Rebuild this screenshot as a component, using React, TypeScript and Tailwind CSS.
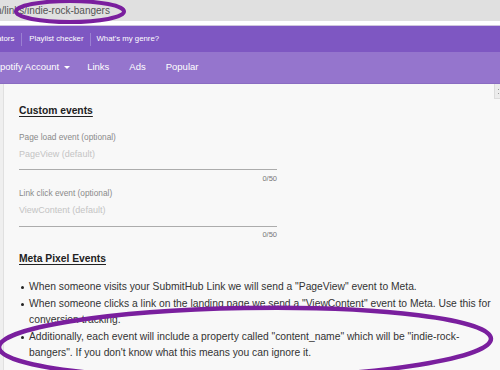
export default function App() {
  const bullets = [
    'When someone visits your SubmitHub Link we will send a "PageView" event to Meta.',
    'When someone clicks a link on the landing page we send a "ViewContent" event to Meta. Use this for conversion tracking.',
    'Additionally, each event will include a property called "content_name" which will be "indie-rock-bangers". If you don\'t know what this means you can ignore it.',
  ];

  return (
    <div className="relative w-[500px] h-[370px] overflow-hidden bg-[#f8f8f8] font-['Liberation_Sans',Arial,sans-serif]">
      {/* browser address bar */}
      <div className="h-[21px] bg-[#e0e0e0] flex items-center overflow-hidden">
        <span className="ml-[-4px] text-[10px] leading-[12px] text-[#555] whitespace-nowrap">
          n/links/indie-rock-bangers
        </span>
      </div>
      <div className="h-[5px] bg-white border-b border-[#cfc6dd]" />

      {/* top nav */}
      <div className="h-[26px] bg-[#7e57c2] flex items-center text-[7.8px] text-white whitespace-nowrap">
        <span className="ml-[-3px]">ators</span>
        <span className="mx-[7px] w-px h-[13px] bg-[#9b80d2]" />
        <span>Playlist checker</span>
        <span className="mx-[6px] w-px h-[13px] bg-[#9b80d2]" />
        <span>What's my genre?</span>
      </div>

      {/* secondary nav */}
      <div className="h-[32px] bg-[#9575cd] flex items-center text-[9.5px] text-white whitespace-nowrap border-b border-[#8a6cc2]">
        <span className="flex items-center">
          potify Account
          <span className="ml-[5px] w-0 h-0 border-l-[3px] border-r-[3px] border-t-[3px] border-l-transparent border-r-transparent border-t-white" />
        </span>
        <span className="ml-[17px]">Links</span>
        <span className="ml-[20px]">Ads</span>
        <span className="ml-[20px]">Popular</span>
      </div>

      {/* content */}
      <div className="flex h-[286px]">
        <div className="w-[4px] bg-[#efefef] border-r border-[#e0e0e0]" />
        <div className="flex-1 pl-[15px] pr-[4px] pt-[21px] text-[#222]">
          <div className="text-[10.3px] leading-[12px] font-bold underline underline-offset-[2px]">Custom events</div>

          <div className="w-[258px] mt-[14px]">
            <div className="text-[8.3px] leading-[12px] text-[#8a8a8a]">Page load event (optional)</div>
            <div className="mt-[5px] text-[9px] leading-[12px] text-[#c4c4c4]">PageView (default)</div>
            <div className="mt-[9px] h-px bg-[#acacac]" />
            <div className="mt-[4px] text-right text-[7.5px] leading-[10px] text-[#777]">0/50</div>
          </div>

          <div className="w-[258px] mt-[3px]">
            <div className="text-[8.3px] leading-[12px] text-[#8a8a8a]">Link click event (optional)</div>
            <div className="mt-[5px] text-[9px] leading-[12px] text-[#c4c4c4]">ViewContent (default)</div>
            <div className="mt-[10px] h-px bg-[#acacac]" />
            <div className="mt-[3px] text-right text-[7.5px] leading-[10px] text-[#777]">0/50</div>
          </div>

          <div className="mt-[13px] text-[10.3px] leading-[12px] font-bold underline underline-offset-[2px]">Meta Pixel Events</div>

          <ul className="mt-[14px] text-[10.3px] leading-[16.6px] text-[#333]">
            {bullets.map((b, i) => (
              <li key={i} className="flex">
                <span className="mt-[7px] ml-[2px] mr-[5px] w-[3px] h-[3px] rounded-full bg-[#222] shrink-0" />
                <span>{b}</span>
              </li>
            ))}
          </ul>
        </div>
      </div>

      {/* scrollbar nub */}
      <div className="absolute right-0 top-[84px] w-[6px] h-[15px] bg-[#ececec] border-l border-b border-[#dcdcdc] flex flex-col items-end justify-center gap-[3px] pr-[1px]">
        <span className="w-px h-px bg-[#999]" />
        <span className="w-px h-px bg-[#999]" />
      </div>

      {/* hand-drawn highlight ellipses */}
      <svg className="absolute inset-0 pointer-events-none" width="500" height="370" viewBox="0 0 500 370">
        <ellipse cx="70" cy="11.5" rx="54" ry="10.5" fill="none" stroke="#7a1f9e" strokeWidth="4" />
        <ellipse cx="245" cy="343" rx="246" ry="35" fill="none" stroke="#7a1f9e" strokeWidth="4.5" transform="rotate(-1 245 343)" />
      </svg>
    </div>
  );
}
